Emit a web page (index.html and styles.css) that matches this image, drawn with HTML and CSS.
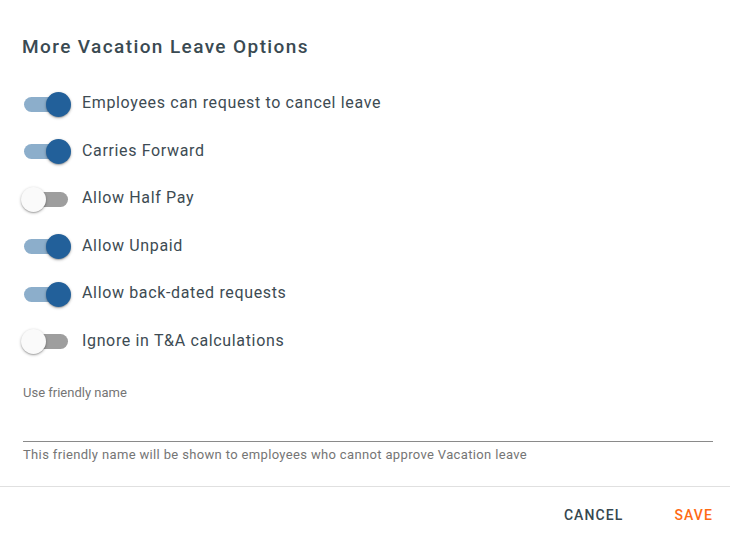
FILE: index.html
```html
<!DOCTYPE html>
<html>
<head>
<meta charset="utf-8">
<link rel="stylesheet" href="styles.css">
</head>
<body>
<div class="dialog">
  <div class="content">
    <h2 class="title">More Vacation Leave Options</h2>
    <div class="options">
      <label class="row"><span class="toggle on"><span class="track"></span><span class="thumb"></span></span><span class="label">Employees can request to cancel leave</span></label>
      <label class="row"><span class="toggle on"><span class="track"></span><span class="thumb"></span></span><span class="label">Carries Forward</span></label>
      <label class="row"><span class="toggle"><span class="track"></span><span class="thumb"></span></span><span class="label">Allow Half Pay</span></label>
      <label class="row"><span class="toggle on"><span class="track"></span><span class="thumb"></span></span><span class="label">Allow Unpaid</span></label>
      <label class="row"><span class="toggle on"><span class="track"></span><span class="thumb"></span></span><span class="label">Allow back-dated requests</span></label>
      <label class="row"><span class="toggle"><span class="track"></span><span class="thumb"></span></span><span class="label">Ignore in T&amp;A calculations</span></label>
    </div>
    <div class="field">
      <div class="field-label">Use friendly name</div>
      <div class="field-input"></div>
      <div class="field-hint">This friendly name will be shown to employees who cannot approve Vacation leave</div>
    </div>
  </div>
  <div class="actions">
    <button class="btn cancel">CANCEL</button>
    <button class="btn save">SAVE</button>
  </div>
</div>
</body>
</html>
```
FILE: styles.css
```css
* { box-sizing: border-box; }
html, body { margin: 0; padding: 0; background: #fff; }
body { font-family: Roboto, "Noto Sans", sans-serif; color: #37474f; width: 730px; height: 540px; overflow: hidden; }
.dialog { display: flex; flex-direction: column; }
.content { padding: 35px 17px 23px 22px; border-bottom: 1px solid #e0e0e0; }
.title { margin: 0; font-size: 19px; font-weight: 500; line-height: 24px; letter-spacing: 1.4px; color: #3a4a52; }
.options { display: flex; flex-direction: column; gap: 23.5px; margin-top: 32px; }
.row { display: flex; align-items: center; height: 24px; cursor: pointer; }
.toggle { position: relative; width: 50px; height: 24px; margin-left: -1px; margin-top: 1px; flex: none; }
.track { position: absolute; left: 3px; top: 5px; width: 44px; height: 15px; border-radius: 8px; background: #9e9e9e; }
.thumb { position: absolute; left: 0; top: 0; width: 25px; height: 25px; border-radius: 50%; background: #fafafa; box-shadow: 0 1px 3px rgba(0,0,0,0.3), 0 1px 1px rgba(0,0,0,0.14); }
.toggle.on .track { background: #8caecb; }
.toggle.on .thumb { left: 25px; background: #22609a; }
.label { margin-left: 11px; font-size: 16px; line-height: 24px; letter-spacing: 0.65px; color: #3d4b53; }
.field { margin-top: 32px; }
.field-label { font-size: 13px; line-height: 16px; color: #757575; margin-left: 1px; }
.field-input { height: 41px; border-bottom: 1px solid #8a8a8a; margin-left: 1px; }
.field-hint { font-size: 13px; line-height: 16px; letter-spacing: 0.35px; margin-top: 5px; color: #757575; margin-left: 1px; }
.actions { display: flex; justify-content: flex-end; padding: 10px 7px 0 0; gap: 31px; }
.btn { font-family: Roboto, "Noto Sans", sans-serif; font-size: 14px; font-weight: 500; letter-spacing: 1.1px; background: none; border: 0; padding: 0 10px; height: 36px; line-height: 36px; cursor: pointer; }
.cancel { color: #37474f; }
.save { color: #ff6a13; }
```
